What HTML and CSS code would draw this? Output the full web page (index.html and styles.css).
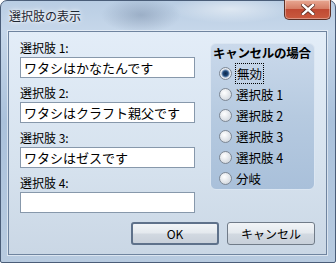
FILE: index.html
```html
<!DOCTYPE html>
<html>
<head>
    <title>選択肢の表示</title>
    <link rel="stylesheet" href="styles.css">
</head>
<body>
    <div class="window">
        <div class="titlebar">
            <span class="title">選択肢の表示</span>
            <button class="close-btn">
                <svg width="14" height="11" viewBox="0 0 14 11">
                    <path d="M2 1 L12 10 M12 1 L2 10" stroke="#5a2a20" stroke-width="4" stroke-linecap="square"/>
                    <path d="M2 1 L12 10 M12 1 L2 10" stroke="#fff" stroke-width="2.4" stroke-linecap="square"/>
                </svg>
            </button>
        </div>

        <div class="client">
            <div class="fields">
                <div class="field">
                    <label>選択肢 1:</label>
                    <div class="textbox">ワタシはかなたんです</div>
                </div>
                <div class="field">
                    <label>選択肢 2:</label>
                    <div class="textbox">ワタシはクラフト親父です</div>
                </div>
                <div class="field">
                    <label>選択肢 3:</label>
                    <div class="textbox">ワタシはゼスです</div>
                </div>
                <div class="field">
                    <label>選択肢 4:</label>
                    <div class="textbox"></div>
                </div>
            </div>

            <div class="group">
                <div class="group-title">キャンセルの場合</div>
                <div class="radio checked"><span class="dot"></span><span class="focus">無効</span></div>
                <div class="radio"><span class="dot"></span>選択肢 1</div>
                <div class="radio"><span class="dot"></span>選択肢 2</div>
                <div class="radio"><span class="dot"></span>選択肢 3</div>
                <div class="radio"><span class="dot"></span>選択肢 4</div>
                <div class="radio"><span class="dot"></span>分岐</div>
            </div>

            <div class="buttons">
                <button class="btn default">OK</button>
                <button class="btn">キャンセル</button>
            </div>
        </div>
    </div>
</body>
</html>
```

FILE: styles.css
```css
body {
    margin: 0;
    font-family: "Noto Sans CJK JP", "DejaVu Sans", sans-serif;
    font-size: 12px;
    color: #000;
    background: #fff;
}

.window {
    width: 336px;
    height: 263px;
    box-sizing: border-box;
    padding: 0 8px 7px 7px;
    border: 1px solid #4a5d78;
    border-radius: 7px 7px 2px 2px;
    background:
        radial-gradient(ellipse 40px 18px at 140px 14px, rgba(90, 110, 140, 0.35), transparent),
        radial-gradient(ellipse 60px 14px at 230px 8px, rgba(255, 255, 255, 0.5), transparent),
        linear-gradient(to bottom, #b9cde3, #c6d7ea 30px, #aac1db 120px, #b8cbe0);
    display: flex;
    flex-direction: column;
}

.titlebar {
    height: 30px;
    display: flex;
    align-items: flex-start;
    justify-content: space-between;
}

.title {
    margin-top: 6px;
    margin-left: 1px;
    font-size: 12px;
    color: #1e2733;
    text-shadow: 0 0 6px #fff, 0 0 3px #fff;
}

.close-btn {
    margin-top: -1px;
    margin-right: -4px;
    width: 47px;
    height: 20px;
    border: 1px solid #5b3026;
    border-top: none;
    border-radius: 0 0 5px 5px;
    background: linear-gradient(to bottom, #e8a893, #d67e66 45%, #c04a33 50%, #c95a3f);
    box-shadow: inset 0 0 0 1px rgba(255, 255, 255, 0.35);
    display: flex;
    align-items: center;
    justify-content: center;
    padding: 0;
}

.client {
    flex: 1;
    border: 1px solid #6f849f;
    box-shadow: 0 0 0 1px rgba(255, 255, 255, 0.5);
    background: linear-gradient(to bottom, #e3edf8, #d6e2ee 60%, #cad7e5);
    display: grid;
    grid-template-columns: 175px 105px;
    grid-template-rows: 1fr auto;
    column-gap: 15px;
    padding: 8px 12px 9px 11px;
}

.fields {
    display: flex;
    flex-direction: column;
    gap: 7px;
}

.field label {
    display: block;
    height: 16px;
    line-height: 16px;
    margin-bottom: 1px;
}

.textbox {
    height: 21px;
    box-sizing: border-box;
    border: 1px solid #8798ab;
    background: #fff;
    padding: 0 3px;
    line-height: 19px;
    font-size: 13px;
}

.group {
    margin-top: 3px;
    height: 147px;
    box-sizing: border-box;
    border: 1px solid #dbe6f2;
    border-radius: 6px;
    background: linear-gradient(to bottom, #cad9eb, #b6cae0 50%, #a9c0da);
    padding: 1px 0 0 2px;
}

.group-title {
    font-weight: bold;
    font-size: 12.5px;
    line-height: 15px;
    margin-bottom: 3px;
    letter-spacing: -0.3px;
}

.radio {
    display: flex;
    align-items: center;
    height: 21px;
    padding-left: 6px;
    gap: 4px;
    font-size: 12.5px;
}

.dot {
    width: 11px;
    height: 11px;
    border-radius: 50%;
    border: 1px solid #7d8794;
    background: radial-gradient(circle at 40% 35%, #ffffff, #d8dde3 70%, #bcc4ce);
    box-sizing: content-box;
}

.radio.checked .dot {
    background: radial-gradient(circle, #0e2748 0, #1f4777 2.5px, #6f8fb5 3.5px, #e3e8ee 4.5px, #f4f6f8);
}

.focus {
    outline: 1px dotted #000;
    outline-offset: 0;
    padding: 0 1px;
}

.buttons {
    grid-column: 1 / 3;
    display: flex;
    justify-content: flex-end;
    gap: 8px;
}

.btn {
    width: 88px;
    height: 23px;
    border: 1px solid #707b88;
    border-radius: 3px;
    background: linear-gradient(to bottom, #f1f4f7, #e4e9ee 48%, #d2d9e1 52%, #c8d0da);
    font-family: "Noto Sans CJK JP", "DejaVu Sans", sans-serif;
    font-size: 12px;
    color: #000;
    padding: 0;
}

.btn.default {
    border: 2px solid #5e718a;
}
```
